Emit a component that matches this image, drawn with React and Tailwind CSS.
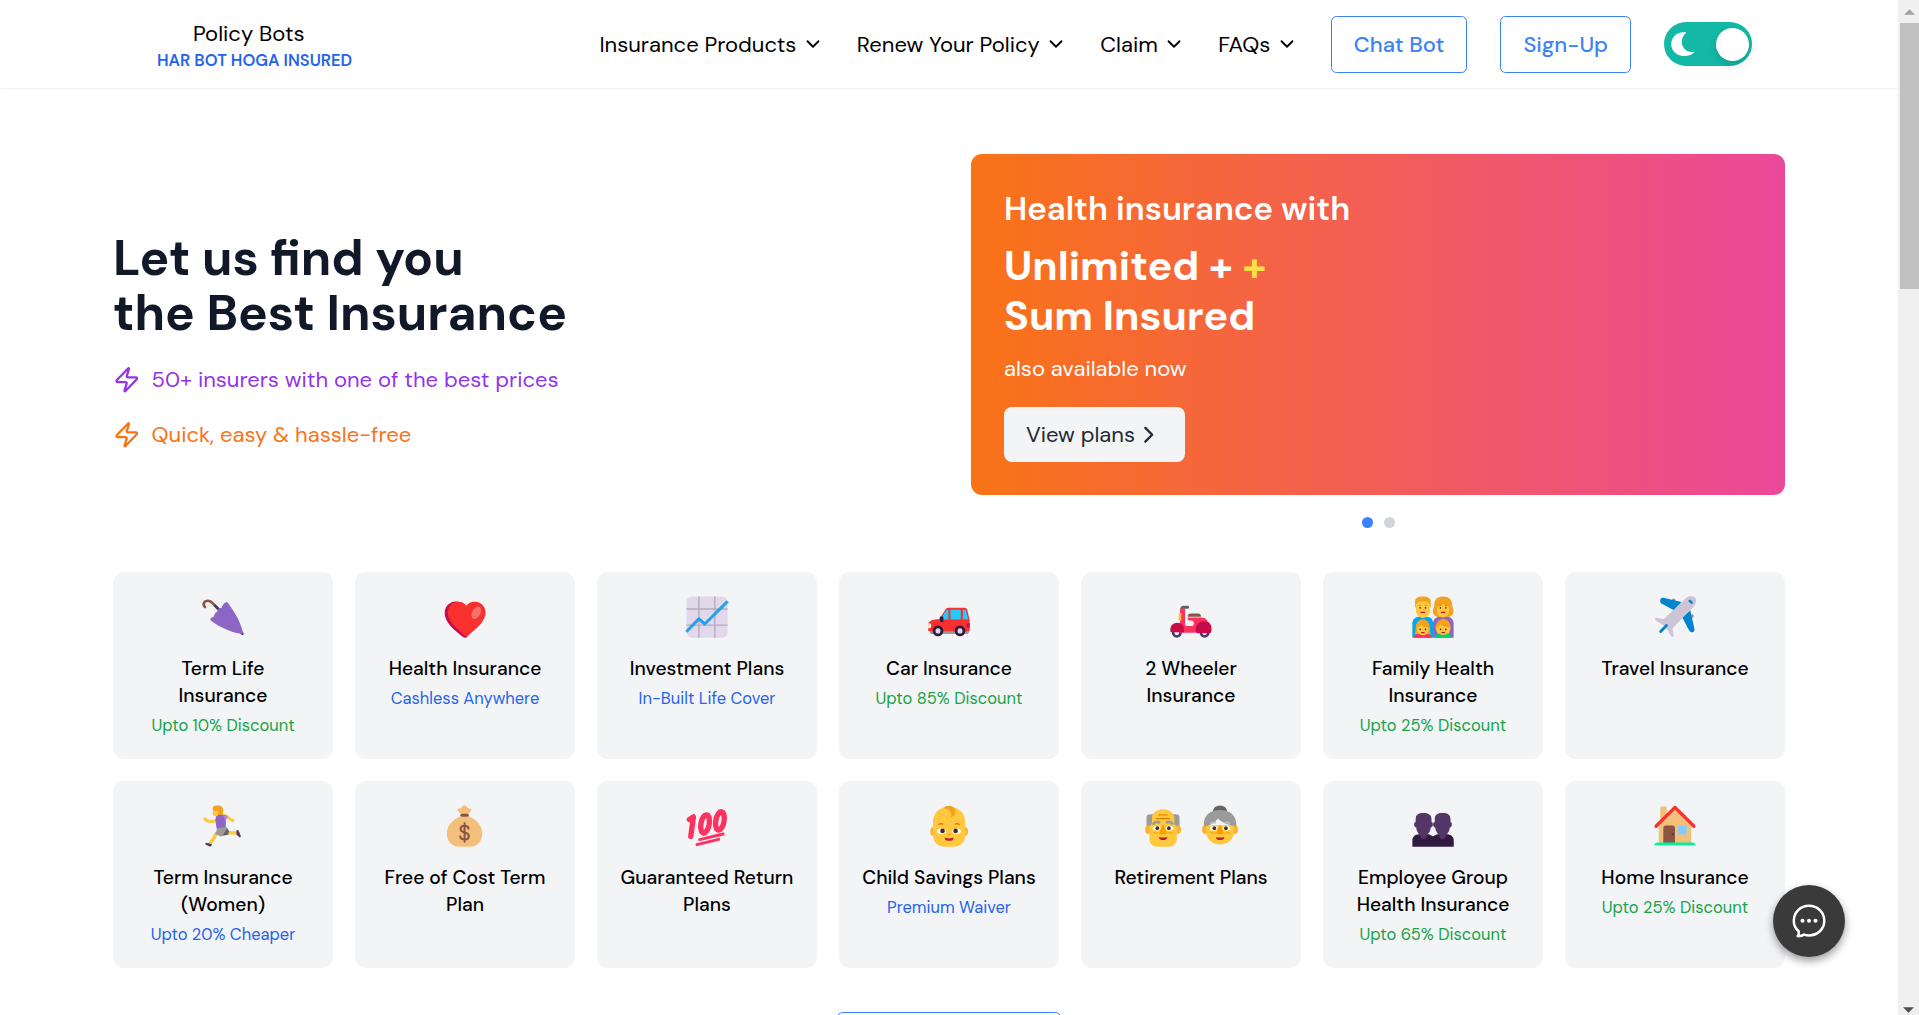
import React from "react";
import { ChevronDown, ChevronRight, Zap } from "lucide-react";

function Art({ children }) {
  return (
    <svg viewBox="0 0 32 32" className="size-11 shrink-0" fill="none" aria-hidden="true">
      {children}
    </svg>
  );
}

const UmbrellaIcon = () => (
  <Art>
    <path d="M2.9 8.8C.8 6.8 2.4 4.2 5 4.2c1.300 0 2.100.5 3 1.400l4.200 4.100" stroke="#8C5543" strokeWidth="1.900" strokeLinecap="round" />
    <path d="m9.800 7.400 5.400 5.300" stroke="#433B6B" strokeWidth="1.900" />
    <path d="m28.800 26.800 1.400 1.500" stroke="#433B6B" strokeWidth="1.700" strokeLinecap="round" />
    <path d="M18.200 5.300c.4-.3.900-.2 1.200.3 4.800 6.300 9.300 13.500 11 21.300.2.900-.5 1.600-1.400 1.300C21.300 27 13 23 7.100 18.500c-.5-.4-.6-.9-.2-1.300.9-.8 2-1.200 2.500-1.300 0-1.800.9-3.300 2.400-3.800 0-1.500 1.300-2.700 3.200-2.700.2-1.700 1.500-3.200 3.200-4.100Z" fill="#8D65C5" />
  </Art>
);

const HeartIcon = () => (
  <Art>
    <g transform="translate(0 .5)">
      <path d="M16 7.900C13 2.900 5.200 2.800 2.300 8.300c-2.700 5.200.2 10.200 3 13.500 2.800 3.200 6.500 5.800 9 8.100 1.100 1 2.500 1 3.600 0z" fill="#CA0B4A" />
      <path d="M17 7.300C14.500 3 6.500 3.300 4.200 8.800c-2.100 5 .9 9.700 3.800 12.800 2.500 2.800 5.700 5.300 8 7.800.5.500 1.300.5 1.800 0 3-3 6.800-5.800 9.600-8.900 2.800-3.200 4.800-7.600 2.700-12C27.600 3.500 19.700 2.900 17 7.300Z" fill="#F8312F" />
      <ellipse cx="24.200" cy="12.400" rx="3" ry="4.800" transform="rotate(28 24.200 12.400)" fill="#F37366" />
    </g>
  </Art>
);

const ChartIcon = () => (
  <Art>
    <rect x="1" y="1" width="30" height="30" rx="4" fill="#E1D8EC" />
    <path d="M10.100 1v30M21.700 1v30M1 10.200h30M1 21.900h30" stroke="#B4ACBC" strokeWidth="1" />
    <path d="m1 26.700 9.100-9.300 4.300 3.700L31 4.600" stroke="#26A0E8" strokeWidth="2.200" strokeLinejoin="round" />
  </Art>
);

const CarIcon = () => (
  <Art>
    <path d="M2.500 26h28v.7c0 1-.7 1.700-1.700 1.700H3.700c-1 0-1.700-.7-1.700-1.700z" fill="#9B9B9B" />
    <path d="M13.300 10.700c.4-.9 1.200-1.500 2.200-1.500h11.700c1 0 1.800.6 2.100 1.500l1.300 5.800c.3 1 .4 2 .4 3v6.800H1.500c-.5 0-.7-.3-.7-.8v-3.600c0-2 1.700-3.600 4-3.900l4.200-.5z" fill="#F8312F" />
    <path d="M13.900 11.300c.2-.4.500-.6.9-.6h.8v7.200H9.800zM17.100 10.700h6.500c.6 0 1 .4 1 1v5.200c0 .6-.4 1-1 1h-6.500zM26.100 10.700h1.200c.5 0 .9.300 1 .8l1.500 5.400c.1.500-.2 1-.8 1h-2.900z" fill="#26C9FC" />
    <path d="M9.300 16.500c0-.6.500-.9 1-.9h.8c.5 0 .8.400.8.800v3.200h-1c-1 0-1.600-.7-1.600-1.500z" fill="#321B41" />
    <path d="M.9 20.600c1.200-.4 2.200.5 2.200 1.600 0 1.200-.9 2.200-2.300 2.200z" fill="#FFF0D8" />
    <path d="M31 20.300c-1.300-.1-2.200.8-2.200 2s1 2 2.200 2z" fill="#CA0B4A" />
    <circle cx="8" cy="26.100" r="3.900" fill="#321B41" />
    <circle cx="24" cy="26.100" r="3.900" fill="#321B41" />
    <ellipse cx="8" cy="26.100" rx="1.800" ry="1.900" fill="#E1D8EC" />
    <ellipse cx="24" cy="26.100" rx="1.800" ry="1.900" fill="#E1D8EC" />
  </Art>
);

const ScooterIcon = () => (
  <Art>
    <circle cx="5.700" cy="27.500" r="2.700" stroke="#433B6B" strokeWidth="1.800" fill="#F3EEF8" />
    <circle cx="25.900" cy="27.500" r="2.700" stroke="#433B6B" strokeWidth="1.800" fill="#F3EEF8" />
    <path d="M8 9.700h3.700V21c0 .8.300 1.400 1 1.600h3.200c1.400 0 2.400-1 2.200-2.300-.2-1-1-1.700-2-1.700h-1c-1 0-1.500-.6-1.500-1.600v-.6h9.800c3.800 0 5 2.400 5 5v6H8z" fill="#FF315F" />
    <path d="M7.300 13h1.600v5.500H7.600a.8.800 0 0 1-.8-.8z" fill="#F9C23C" />
    <path d="M1 26.500v-1.400c0-2.700 2.100-4.900 4.900-4.900 3 0 5 2.100 5 4.900v2H2c-.7 0-1-.2-1-.6ZM19.400 24.800c0-3 2.400-5.500 5.400-5.500h1.600c2.900 0 4.500 2.100 4.500 5v1.500c0 1.400-.7 2.100-2 2.100h-7.400c-1.200 0-2.100-1-2.100-2.300z" fill="#CA0B4A" />
    <path d="M13.600 15.600c0-1.300.9-2.100 2.200-2.100h5.400c1.200 0 2.100.8 2.100 2.100v.3h-9.700z" fill="#8C5543" />
    <path d="M8.300 10c0-1.300.9-2.100 2.100-2.100h3.200c.7 0 1 .4 1 1s-.4 1.100-1 1.100z" fill="#636363" />
  </Art>
);

const Eyes = ({ l, r, y, s = 0.6 }) => (
  <g fill="#402A32">
    <circle cx={l} cy={y} r={s} />
    <circle cx={r} cy={y} r={s} />
  </g>
);

const FamilyIcon = () => (
  <Art>
    <path d="M1 31V20.500C1 18 3 16 5.500 16H12c2.500 0 4 2 4 4.500V31z" fill="#00A6ED" />
    <path d="M16 31V20.500c0-2.500 2-4.500 4.500-4.500h6c2.500 0 4.500 2 4.500 4.500V31z" fill="#8D65C5" />
    <path d="M3 9V5.500C2.600 2.300 5 1 8.500 1s6.300 1.200 5.800 4.500V9z" fill="#F3A11E" />
    <path d="M3.600 8.500c0-2.300 1.200-3.600 2.800-3.800h4.500c1.800.2 2.900 1.800 2.900 3.800v3c0 3-2.200 5.200-5.100 5.200s-5.100-2.200-5.100-5.200z" fill="#FFC83D" />
    <path d="M16 10.500C16.900 9 17 7.500 17 6c.3-3.200 2.700-5 6.400-5 3.900 0 6.100 2 6.400 5.200.2 2 .4 3 1 4.500.8 3-1.700 5.600-4.800 5.300h-5c-3.400.2-5.800-2.500-5-5.500Z" fill="#F3A11E" />
    <path d="M18.900 8.500c2.100-.2 3.400-1.200 4.200-2.300 1 1.400 2.500 2.100 4.700 2.300v3c0 2.600-2 4.800-4.500 4.800s-4.400-2.200-4.400-4.800z" fill="#FFC83D" />
    <Eyes l={6.600} r={10.600} y={9.400} />
    <Eyes l={21.400} r={25.300} y={9.400} />
    <path d="M7.300 12.700h2.600M22.100 12.700h2.500" stroke="#CA0B4A" strokeWidth=".9" strokeLinecap="round" />
    <path d="M5.700 7.500h1.500M10 7.500h1.500M20.600 7.500h1.500M24.700 7.500h1.500" stroke="#C86A1B" strokeWidth=".5" />
    <path d="M2.500 28.500c.7-1 .8-2.500.8-4.500.1-3.700 2.200-6.300 5.300-6.300s5.200 2.600 5.200 6.300c0 2 .1 3.500.8 4.500z" fill="#F3A11E" />
    <path d="M17.800 24.500c0-4.200 2.200-7 5.600-7s5.500 2.800 5.500 7z" fill="#F3A11E" />
    <path d="M4.300 23.700c1.600-.4 2.600-1.200 3-2.200 1.200 1.400 3.200 2.100 5.600 2.200 0 3.600-1.700 6-4.300 6s-4.300-2.600-4.300-6ZM18.200 23.800c1.400-.4 2.500-1.100 2.900-2.300 1.700 1.300 4.200 1.900 7.300 2.100.4 3.500-1.400 6.100-4.800 6.100s-5.400-2.500-5.400-5.900Z" fill="#FFC83D" />
    <path d="M2 31c.3-2 2-2.700 4.300-2.700.5 1.300 4.100 1.300 4.700 0 2.300 0 3.700.9 4 2.700z" fill="#FF315F" />
    <path d="M17 31c.2-1.900 1.700-2.800 4-2.800.7 1.300 4.200 1.300 4.900 0 2.200 0 3.700.9 4 2.800z" fill="#00D26A" />
    <Eyes l={6.700} r={10.600} y={25} s={0.600} />
    <Eyes l={21.500} r={25.300} y={25} s={0.600} />
    <path d="M7.700 27.300h1.900M22.500 27.300h1.900" stroke="#CA0B4A" strokeWidth=".9" strokeLinecap="round" />
  </Art>
);

const PlaneIcon = () => (
  <Art>
    <path d="M13.300 4.500 14 3c.5-.8 1.900-.6 2.200.4v1.800zM27 17.700l1.400-.7c.9-.5 1.700-1.700 1-2.500-.5-.6-1.300-.5-1.800 0z" fill="#998EA4" />
    <path d="M5.300 3.400c.2-1 1-1.600 2.200-1.400l13.200 3-5.200 6.200L6.500 6.400c-1-.5-1.500-1.800-1.200-3ZM27.100 11l3 13.500c.3 1.200-.2 2.200-1.200 2.500-1.100.3-2.100-.2-2.600-1.200l-5-9.500z" fill="#0084CE" />
    <path d="M23.900 2.300c1.900-1.700 5-1.900 6.500-.6 1.400 1.400 1.200 4.300-.5 6.300L14.200 24.200l.8 5c.2 1.200-1 1.900-1.700.9L9 22.900l-7.100-4.400c-1.100-.8-.3-1.900.9-1.700l5.200.7z" fill="#CDC4D6" />
    <path d="m9.800 22.200-4.200 4.300" stroke="#0084CE" strokeWidth="2.100" strokeLinecap="round" />
    <path d="m26.700 4.200 1.400 1.400" stroke="#0084CE" strokeWidth="1.800" strokeLinecap="round" />
  </Art>
);

const RunnerIcon = () => (
  <Art>
    <path d="m14 8.700 2.800-.4c2 .2 3.200 2.500 6.400 3.700" stroke="#FFC83D" strokeWidth="2.300" strokeLinecap="round" />
    <path d="M2.900 10.800c1.500 2 3.900 2.400 8 1.400" stroke="#FFC83D" strokeWidth="2.300" strokeLinecap="round" />
    <path d="M8.700 3c.3-1 1.600-1.700 3.200-1.400 1.900.3 2.700 2 2.400 4.300l-1.200 3.200H11c-2 0-2.600-1-2.400-2.800z" fill="#FFC83D" />
    <path d="M8.700 4.400c-.8-2 .7-3.400 3.300-3.400 2.800 0 4.300 1.500 4.200 3.800l-.3 2c-.1 1.700-1.200 2.600-3 2-1-1.200-.3-2.500-.3-3.800-1.200.3-2.500.1-3.900-.6Z" fill="#F3A11E" />
    <path d="m11 21.500-1.500 3-2.800 4M17 21.500l4.200-.7 4.700.4" stroke="#FFC83D" strokeWidth="2.400" strokeLinecap="round" strokeLinejoin="round" />
    <path d="M11 9c1-1 2.300-1.300 4-1.200l3.200.4-.2 9.300-6.500.9C11.100 15 9.900 12 11 9Z" fill="#8D65C5" />
    <path d="m16 7.900 3.600.8-1.800 4z" fill="#AF85DB" />
    <path d="m12 17.600-1.700 4.200 4 1.900 4.900-1.100.3-4-1.200-2.200z" fill="#9B9B9B" />
    <path d="m19 17.500 1.400 2.300-.7 2.600-3.700.4z" fill="#636363" />
    <path d="M3.800 28.200 8 29.200c-.2 1-.7 1.700-1.600 1.700l-2.800-1.300c-.7-.5-.5-1.200.2-1.400ZM25.800 19.500c.2-.8 1.100-.7 1.600 0l1.600 4c.1.600-.6.900-1.200.6l-2-2z" fill="#533566" />
  </Art>
);

const MoneyIcon = () => (
  <Art>
    <path d="M11.700 3.300c1.100.2 1.500-.3 2.100-1.300.8-1.200 2.600-1.200 3.600 0 .7 1 1 1.500 2.200 1.300.9-.2 1.400.7.900 1.500l-2.300 3h-5.100l-2.300-3c-.5-.8 0-1.700.9-1.500Z" fill="#F3C07B" />
    <path d="M12.600 9h6.200c5.700 2 9.700 7 9.700 12.200 0 5.700-3.500 9.800-8.900 9.800h-7.800c-5.500 0-9-4-9-9.800C2.800 16 6.900 11 12.600 9Z" fill="#F3C07B" />
    <rect x="12.600" y="7" width="6.200" height="2.300" rx="1.100" fill="#8C5543" />
    <path d="M15.700 14v13.500M18.600 17.800c-.2-1.300-1.200-2-2.900-2-1.800 0-2.900.8-2.900 2.300 0 3.500 6 1.600 6 5.100 0 1.700-1.300 2.600-3.100 2.600-1.900 0-3-.8-3.200-2.300" stroke="#8C5543" strokeWidth="1.500" strokeLinecap="round" />
  </Art>
);

const HundredIcon = () => (
  <Art>
    <g stroke="#FF315F" strokeWidth="3.900" strokeLinecap="round" strokeLinejoin="round">
      <path d="m3.200 11.300 2.900-1.900-1.900 14.200" />
      <ellipse cx="14.600" cy="14.500" rx="3" ry="6.700" transform="rotate(10 14.600 14.500)" />
      <ellipse cx="25.400" cy="12.300" rx="3" ry="6.700" transform="rotate(10 25.400 12.300)" />
      <path d="m10.600 25.900 17.200-4.100M8.700 29.600l15.800-3.900" strokeWidth="2.100" />
    </g>
  </Art>
);

const BabyIcon = () => (
  <Art>
    <ellipse cx="4.800" cy="20" rx="2.400" ry="3.300" fill="#FFB02E" />
    <ellipse cx="27.400" cy="20" rx="2.400" ry="3.300" fill="#FFB02E" />
    <path d="M4.300 13.500C4.300 6.300 9.300 2 16.100 2s11.700 4.300 11.700 11.500v9c0 5.100-3.300 8.500-8.300 8.500h-6.800c-5 0-8.400-3.400-8.400-8.500z" fill="#FFC83D" />
    <path d="M12.200 2.900C14 .2 20.700.8 20.700 5.600c0 2-1 3.600-3.400 4 1.200-3-.4-5.600-5.100-6.700Z" fill="#F3A11E" />
    <ellipse cx="10.700" cy="19.800" rx="3.200" ry="2" fill="#fff" />
    <ellipse cx="21.400" cy="19.800" rx="3.200" ry="2" fill="#fff" />
    <Eyes l={11.300} r={20.800} y={19.600} s={1.700} />
    <path d="M8.500 14.900c1-.7 2.200-.7 3-.3M20.500 14.600c1-.4 2.200-.3 3 .3" stroke="#E76D1C" strokeWidth=".9" strokeLinecap="round" />
    <path d="M14.900 21.900h2.300l-.5 1h-1.200z" fill="#F59F00" />
    <path d="M12.800 24.400c1.800.8 4.800.8 6.600 0-.2 2-1.500 2.400-3.300 2.400s-3.100-.4-3.300-2.400Z" fill="#BB1D40" />
  </Art>
);

const ElderFace = () => (
  <>
    <path d="m15.400 15.500-1.900 5c-.4.900.2 1.500 1 1.500h3c.8 0 1.400-.6 1-1.500l-1.900-5z" fill="#F59F00" />
    <ellipse cx="11.400" cy="17.600" rx="2.700" ry="1.600" fill="#fff" />
    <ellipse cx="20.800" cy="17.600" rx="2.700" ry="1.600" fill="#fff" />
    <Eyes l={11.900} r={20.300} y={17.600} s={1.350} />
    <path d="M9.300 20.400c.9.800 2.200 1.100 3.200.6M22.900 20.400c-.9.800-2.200 1.100-3.200.6" stroke="#F59F00" strokeWidth=".8" strokeLinecap="round" />
    <path d="M13 24c1.900.6 4.300.6 6.200 0-.2 1.800-1.400 2.200-3.100 2.200S13.200 25.800 13 24Z" fill="#BB1D40" />
  </>
);

const GrandpaIcon = () => (
  <Art>
    <path d="M4 16V10c0-2 1-2.600 3-2.600h18c2 0 3 .6 3 2.600v6z" fill="#9B9B9B" />
    <ellipse cx="5.200" cy="18.600" rx="2.200" ry="3.200" fill="#FFB02E" />
    <ellipse cx="26.900" cy="18.600" rx="2.200" ry="3.200" fill="#FFB02E" />
    <path d="M8 9c1.200-3.500 4.400-5.200 8-5.200S23 5.500 24.200 9v5l1.900 3v8c0 3.700-2.500 6-6 6h-8c-3.500 0-6-2.300-6-6v-8L8 14z" fill="#FFC83D" />
    <path d="M13 8h6M11.400 10.600h9.300" stroke="#D67D00" strokeWidth=".9" strokeLinecap="round" />
    <path d="M9.200 14.200c1-1.200 2.400-1.500 4-.9M22.900 14.200c-1-1.200-2.400-1.500-4-.9" stroke="#9B9B9B" strokeWidth="2" strokeLinecap="round" />
    <ElderFace />
  </Art>
);

const GrandmaIcon = () => (
  <Art>
    <ellipse cx="16" cy="4.800" rx="5" ry="3.800" fill="#636363" />
    <ellipse cx="5.200" cy="18.600" rx="2.200" ry="3.200" fill="#FFB02E" />
    <ellipse cx="26.900" cy="18.600" rx="2.200" ry="3.200" fill="#FFB02E" />
    <path d="M5.700 15.500h20.700v3.800c0 6-4.300 10.200-10.300 10.200S5.700 25.300 5.700 19.300z" fill="#FFC83D" />
    <path d="M4.200 15.800C3.800 8.500 8.700 4.400 16 4.400s12.200 4.100 11.900 11.400l-1.600.2C21 14.700 17.500 13.500 14.500 10.500 12.600 13.600 9.200 15 5.800 16.200z" fill="#9B9B9B" />
    <path d="M9.300 14.200c1-.9 2.100-1 3.400-.6M22.900 14.200c-1-.9-2.100-1-3.400-.6" stroke="#BFBFBF" strokeWidth="1.200" strokeLinecap="round" />
    <ElderFace />
  </Art>
);

const GroupIcon = () => (
  <Art>
    <path d="M1 31v-4.500c0-3 2.400-4.500 5.200-4.500H13l3 1.500L19 22h6.900c2.800 0 5.200 1.500 5.200 4.500V31z" fill="#321B41" />
    <path d="M3.400 13V11c0-3.200 2-4.500 5.600-4.500s5.900 1.300 5.900 4.500v2c.9.300 1.100.8 1 2-.1 1.300-.7 2-1.500 2-.3 2.700-1.500 4.300-3 5.500v1c0 1-1.100 2-2.300 2s-2.400-1-2.400-2v-1C5.200 21.300 4 19.700 3.800 17c-.8 0-1.400-.7-1.500-2-.1-1.200.2-1.700 1.100-2ZM17.300 13V11c0-3.200 2-4.500 5.700-4.500s5.700 1.300 5.700 4.500v2c.9.300 1.100.8 1 2-.1 1.300-.7 2-1.500 2-.2 2.700-1.400 4.300-2.900 5.500v1c0 1-1.200 2-2.400 2s-2.300-1-2.300-2v-1c-1.500-1.200-2.700-2.800-3-5.500-.8 0-1.400-.7-1.500-2-.1-1.200.3-1.700 1.200-2Z" fill="#533566" />
  </Art>
);

const HouseIcon = () => (
  <Art>
    <path d="M5.300 3c0-.7.400-1.100 1-1.100h2.600c.7 0 1.100.4 1.100 1.100v10H5.300z" fill="#F3C07B" />
    <path d="M4.200 15.500 16 3.200l11.800 12.300v13H4.200z" fill="#F3C07B" />
    <path d="M7.500 17.300c0-1 .7-1.700 1.700-1.700h5.100c1 0 1.700.7 1.700 1.700v11H7.500z" fill="#8C5543" />
    <circle cx="14.200" cy="22" r=".7" fill="#533524" />
    <rect x="18.200" y="15.600" width="6.400" height="6.600" rx=".7" fill="#83CBFF" />
    <path d="M2.200 16.200 16 2.500l13.800 13.700" stroke="#F8312F" strokeWidth="2.400" strokeLinecap="round" strokeLinejoin="round" />
    <path d="M1 30c0-1.300 1-2 2.300-2h25.400c1.400 0 2.300.7 2.300 2z" fill="#00F397" />
  </Art>
);

const plans = [
  { title: "Term Life Insurance", note: "Upto 10% Discount", tone: "text-[#16a34a]", icons: [UmbrellaIcon] },
  { title: "Health Insurance", note: "Cashless Anywhere", tone: "text-[#2563eb]", icons: [HeartIcon] },
  { title: "Investment Plans", note: "In-Built Life Cover", tone: "text-[#2563eb]", icons: [ChartIcon] },
  { title: "Car Insurance", note: "Upto 85% Discount", tone: "text-[#16a34a]", icons: [CarIcon] },
  { title: "2 Wheeler Insurance", icons: [ScooterIcon] },
  { title: "Family Health Insurance", note: "Upto 25% Discount", tone: "text-[#16a34a]", icons: [FamilyIcon] },
  { title: "Travel Insurance", icons: [PlaneIcon] },
  { title: "Term Insurance (Women)", note: "Upto 20% Cheaper", tone: "text-[#2563eb]", icons: [RunnerIcon] },
  { title: "Free of Cost Term Plan", icons: [MoneyIcon] },
  { title: "Guaranteed Return Plans", icons: [HundredIcon] },
  { title: "Child Savings Plans", note: "Premium Waiver", tone: "text-[#2563eb]", icons: [BabyIcon] },
  { title: "Retirement Plans", icons: [GrandpaIcon, GrandmaIcon] },
  { title: "Employee Group Health Insurance", note: "Upto 65% Discount", tone: "text-[#16a34a]", icons: [GroupIcon] },
  { title: "Home Insurance", note: "Upto 25% Discount", tone: "text-[#16a34a]", icons: [HouseIcon] },
];

function PlanCard({ title, note, tone, icons }) {
  return (
    <div className="flex h-[187px] flex-col items-center rounded-[11px] bg-[#f3f4f6] px-[22px] pt-[23.4px] text-center">
      <div className="mb-[16.9px] flex gap-[13px]">
        {icons.map((Icon, i) => (
          <Icon key={i} />
        ))}
      </div>
      <h3 className="text-[19.25px] leading-[26.95px] font-medium text-black">{title}</h3>
      {note && <p className={`mt-[4.5px] text-[16.5px] leading-[22px] ${tone}`}>{note}</p>}
    </div>
  );
}

function Header() {
  return (
    <header className="flex h-[88px] shrink-0 items-center justify-between pr-[146px] pl-[157px] shadow-[0_1px_2px_rgba(0,0,0,0.07)]">
      <div>
        <p className="pl-[36px] leading-[33px]">Policy Bots</p>
        <p className="text-[16.5px] leading-[22px] font-semibold text-[#2563eb]">HAR BOT HOGA INSURED</p>
      </div>
      <nav className="flex items-center gap-[33px]">
        {["Insurance Products", "Renew Your Policy", "Claim", "FAQs"].map((item) => (
          <a key={item} className="flex items-center gap-[5.5px]">
            {item}
            <ChevronDown size={22} />
          </a>
        ))}
        {["Chat Bot", "Sign-Up"].map((item) => (
          <button
            key={item}
            className="h-[57px] rounded-[5.5px] border border-[#3b82f6] px-[22px] font-medium text-[#3b82f6]"
          >
            {item}
          </button>
        ))}
        <div className="flex h-11 w-[88px] items-center justify-between rounded-full bg-[#14b8a6] pr-[3px] pl-[7px]">
          <svg viewBox="0 0 24 24" className="size-6" fill="#fff">
            <path d="M15.500.4C13.400 2 10.800 5 10.800 9.800c0 6 4.600 10.200 9.500 10.200 1.300 0 2.400-.2 3.400-.6C21.800 22.300 17.800 24 13 24 5.600 24 .2 18.700.2 12.200.2 5.500 5.600.2 12.200.2c1.200 0 2.300 0 3.300.2Z" />
          </svg>
          <span className="size-[33px] rounded-full bg-white shadow-[0_4px_8px_rgba(0,0,0,0.15)]" />
        </div>
      </nav>
    </header>
  );
}

function Hero() {
  return (
    <section className="grid grid-cols-2 items-center gap-[44px]">
      <div>
        <h1 className="text-[49.5px] leading-[55px] font-bold text-[#111827]">
          Let us find you
          <br />
          the Best Insurance
        </h1>
        <ul className="mt-[22px] space-y-[22px] leading-[33px]">
          <li className="flex items-center gap-[11px] text-[#9333ea]">
            <Zap size={27.5} />
            50+ insurers with one of the best prices
          </li>
          <li className="flex items-center gap-[11px] text-[#f97316]">
            <Zap size={27.5} />
            Quick, easy &amp; hassle-free
          </li>
        </ul>
      </div>
      <div>
        <div className="h-[341px] rounded-[11px] bg-linear-to-r/srgb from-[#f97316] to-[#ec4899] p-[33px] text-white">
          <h2 className="text-[33px] leading-[44px] font-semibold">Health insurance with</h2>
          <p className="mt-[11px] text-[41.25px] leading-[49.5px] font-bold">
            Unlimited + <span className="text-[#fde047]">+</span>
            <br />
            Sum Insured
          </p>
          <p className="mt-[11px] leading-[33px]">also available now</p>
          <button className="mt-[22px] flex h-[55px] items-center rounded-[8px] bg-[#f3f4f6] px-[22px] text-[#1f2937]">
            View plans
            <ChevronRight size={27.5} />
          </button>
        </div>
        <div className="mt-[22px] flex justify-center gap-[11px]">
          <span className="size-[11px] rounded-full bg-[#3b82f6]" />
          <span className="size-[11px] rounded-full bg-[#d1d5db]" />
        </div>
      </div>
    </section>
  );
}

export default function App() {
  return (
    <div className="relative flex h-[1015px] overflow-hidden bg-white font-['DM_Sans',Inter,sans-serif] text-[22px] text-black">
      <div className="flex w-[1898px] flex-col">
        <Header />
        <main className="px-[113px] pt-[66px]">
          <Hero />
          <section className="mt-[44px] grid grid-cols-7 gap-[22px]">
            {plans.map((plan) => (
              <PlanCard key={plan.title} {...plan} />
            ))}
          </section>
          <div className="mt-[44px] flex justify-center">
            <button className="h-[57px] w-[224px] rounded-[5.5px] border border-[#3b82f6]" aria-label="View more" />
          </div>
        </main>
      </div>

      <div className="flex w-[21px] flex-col items-center justify-between bg-[#f0f0f0] pt-[9px] pb-[2px]">
        <div className="flex w-full flex-col items-end">
          <svg viewBox="0 0 12 6" className="mr-1 h-[6px] w-[11px]" fill="#a3a3a3">
            <path d="M6 0 12 6H0z" />
          </svg>
          <div className="mt-2 h-[266px] w-[19px] bg-[#c1c1c1]" />
        </div>
        <svg viewBox="0 0 12 6" className="h-[6px] w-[11px]" fill="#505050">
          <path d="M0 0h12L6 6z" />
        </svg>
      </div>

      <button
        aria-label="Open chat"
        className="absolute right-[74px] bottom-[58px] flex size-[72px] items-center justify-center rounded-full bg-[#3a3a3a] shadow-[0_4px_8px_rgba(0,0,0,0.4)]"
      >
        <svg viewBox="0 0 34 34" className="size-[34px]" fill="none">
          <path
            d="M6.700 27.300C3.500 24.600 1.800 21 1.800 16.700 1.800 8.200 8.500 1.800 17 1.800s15.300 6.400 15.300 14.900S25.500 31.400 17 31.400c-1.800 0-3.400-.3-5-.8-1.800 1.100-4 1.700-6.300 1.500 1-1.300 1.400-2.800 1-4.800Z"
            stroke="#fff"
            strokeWidth="2.500"
            strokeLinejoin="round"
          />
          <g fill="#fff">
            <circle cx="10.500" cy="16.700" r="2" />
            <circle cx="17" cy="16.700" r="2" />
            <circle cx="23.500" cy="16.700" r="2" />
          </g>
        </svg>
      </button>
    </div>
  );
}
